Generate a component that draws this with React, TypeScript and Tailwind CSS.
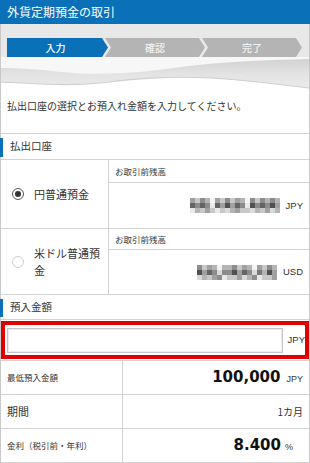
import React from "react";

const shades = ["#505050", "#646464", "#787878", "#8c8c8c", "#a0a0a0", "#b4b4b4", "#c8c8c8", "#d9d9d9", "#e8e8e8", "#f4f4f4"];

function Mosaic({ rows, cell }: { rows: string[]; cell: number }) {
  return (
    <div className="flex flex-col">
      {rows.map((r, i) => (
        <div key={i} className="flex">
          {r.split("").map((c, j) => (
            <div key={j} style={{ width: cell, height: cell, background: shades[Number(c)] }} />
          ))}
        </div>
      ))}
    </div>
  );
}

function SectionHeader({ children, h }: { children: React.ReactNode; h: string }) {
  return (
    <div className={`relative border-b border-[#d3d3d3] flex items-center pl-[9px] text-[10.5px] leading-none ${h}`}>
      <span className="absolute left-[-1px] top-[4px] bottom-[2px] w-[3px] bg-[#0a71b9]" />
      {children}
    </div>
  );
}

export default function App() {
  return (
    <div className="w-[310px] h-[463px] overflow-hidden bg-white text-[#333] font-['Noto_Sans_CJK_JP','Noto_Sans',sans-serif]">
      <div className="h-[24px] bg-[#0a71b9] flex items-center pl-[7px] text-white text-[12px] leading-none">
        外貨定期預金の取引
      </div>
      <div className="border-x border-[#c9c9c9]">
        <div className="bg-[#e8e8e8] pt-[14px] pl-[6px]">
          <div className="flex h-[19px] text-[10px] leading-none font-medium">
            <div className="w-[101px] bg-[#0a71b9] text-white flex items-center justify-center pr-[4px] [clip-path:polygon(0_0,95px_0,101px_50%,95px_100%,0_100%)]">
              入力
            </div>
            <div className="w-[100px] ml-[-3px] bg-[#b4b4b4] text-[#f2f2f2] flex items-center justify-center [clip-path:polygon(0_0,94px_0,100px_50%,94px_100%,0_100%,6px_50%)]">
              確認
            </div>
            <div className="w-[100px] ml-[-3px] bg-[#b4b4b4] text-[#f2f2f2] flex items-center justify-center [clip-path:polygon(0_0,94px_0,100px_50%,94px_100%,0_100%,6px_50%)]">
              完了
            </div>
          </div>
        </div>
        <svg className="block w-full h-[36px]" viewBox="0 0 308 36" preserveAspectRatio="none">
          <defs>
            <linearGradient id="band" x1="0" y1="0" x2="0" y2="1">
              <stop offset="0" stopColor="#d0d0d0" />
              <stop offset="0.5" stopColor="#e4e4e4" />
              <stop offset="1" stopColor="#ececec" />
            </linearGradient>
          </defs>
          <rect x="0" y="0" width="308" height="36" fill="url(#band)" />
          <path d="M0,0 L308,0 L308,2 C260,3 220,5 180,10 C140,16 100,19 60,15 C35,12 15,11 0,11 Z" fill="#f7f7f7" />
          <path d="M0,25 C40,27 65,29 100,26 C140,21 170,19 210,21 C250,23 280,28 308,31 L308,36 L0,36 Z" fill="#ffffff" />
          <path d="M0,25 C40,27 65,29 100,26 C140,21 170,19 210,21 C250,23 280,28 308,31" fill="none" stroke="#cfcfcf" strokeWidth="1.2" />
        </svg>
        <div className="pt-[6px] pb-[20px] pl-[6px] text-[10px] leading-[14px] border-b border-[#d3d3d3]">
          払出口座の選択とお預入れ金額を入力してください。
        </div>
        <SectionHeader h="h-[26px]">払出口座</SectionHeader>

        <div className="grid grid-cols-[108px_1fr] border-b border-[#d3d3d3]">
          <div className="border-r border-[#d3d3d3] flex items-center pl-[11px] gap-[10px]">
            <span className="w-[12px] h-[12px] rounded-full border-[1.5px] border-[#5a5a5a] flex items-center justify-center">
              <span className="w-[6px] h-[6px] rounded-full bg-[#333]" />
            </span>
            <span className="text-[11px] leading-none">円普通預金</span>
          </div>
          <div>
            <div className="h-[23px] border-b border-[#d3d3d3] flex items-center pl-[6px] text-[8.5px] leading-none">
              お取引前残高
            </div>
            <div className="h-[45px] flex items-center justify-end pr-[6px] gap-[6px]">
              <Mosaic
                cell={5}
                rows={["463594636459363535", "131381404138031304", "856468675466756475"]}
              />
              <span className="font-['Liberation_Sans',sans-serif] text-[9.5px] leading-none">JPY</span>
            </div>
          </div>
        </div>

        <div className="grid grid-cols-[108px_1fr] border-b border-[#d3d3d3]">
          <div className="border-r border-[#d3d3d3] flex items-center pl-[11px] gap-[10px]">
            <span className="w-[12px] h-[12px] rounded-full border border-[#cfcfcf] shrink-0" />
            <span className="w-[68px] text-[11px] leading-[17px]">米ドル普通預金</span>
          </div>
          <div>
            <div className="h-[21px] border-b border-[#d3d3d3] flex items-center pl-[6px] text-[8.5px] leading-none">
              お取引前残高
            </div>
            <div className="h-[44px] flex items-center justify-end pr-[6px] gap-[6px]">
              <Mosaic cell={5} rows={["3645955364594635", "0413733041372504", "7564386647538664"]} />
              <span className="font-['Liberation_Sans',sans-serif] text-[9.5px] leading-none">USD</span>
            </div>
          </div>
        </div>

        <SectionHeader h="h-[25px]">預入金額</SectionHeader>

        <div className="mt-[1px] h-[38px] border-[4px] border-[#e00000] flex items-center pl-[2px] gap-[5px]">
          <div className="w-[276px] h-[25px] border border-[#c4c4c4] bg-white shadow-[inset_0_0_0_1px_#ececec]" />
          <span className="font-['Liberation_Sans',sans-serif] text-[9.5px] leading-none">JPY</span>
        </div>

        <div className="mt-[1px] border-t border-[#d3d3d3]">
          <div className="grid grid-cols-[122px_1fr] h-[34px] border-b border-[#d3d3d3]">
            <div className="border-r border-[#d3d3d3] flex items-center pl-[6px] text-[8.5px] leading-none">最低預入金額</div>
            <div className="flex items-baseline justify-end pr-[6px] gap-[6px] pt-[9px]">
              <span className="font-['DejaVu_Sans',sans-serif] font-bold text-[15px] leading-none text-[#111]">100,000</span>
              <span className="font-['Liberation_Sans',sans-serif] text-[9px] leading-none">JPY</span>
            </div>
          </div>
          <div className="grid grid-cols-[122px_1fr] h-[34px] border-b border-[#d3d3d3]">
            <div className="border-r border-[#d3d3d3] flex items-center pl-[6px] text-[11px] leading-none">期間</div>
            <div className="flex items-center justify-end pr-[6px] text-[10px] leading-none">1カ月</div>
          </div>
          <div className="grid grid-cols-[122px_1fr] h-[34px] border-b border-[#d3d3d3]">
            <div className="border-r border-[#d3d3d3] flex items-center pl-[6px] text-[8.5px] leading-none">金利（税引前・年利）</div>
            <div className="flex items-baseline justify-end pr-[16px] gap-[4px] pt-[9px]">
              <span className="font-['DejaVu_Sans',sans-serif] font-bold text-[15px] leading-none text-[#111]">8.400</span>
              <span className="font-['Liberation_Sans',sans-serif] text-[9px] leading-none">%</span>
            </div>
          </div>
        </div>
      </div>
    </div>
  );
}
